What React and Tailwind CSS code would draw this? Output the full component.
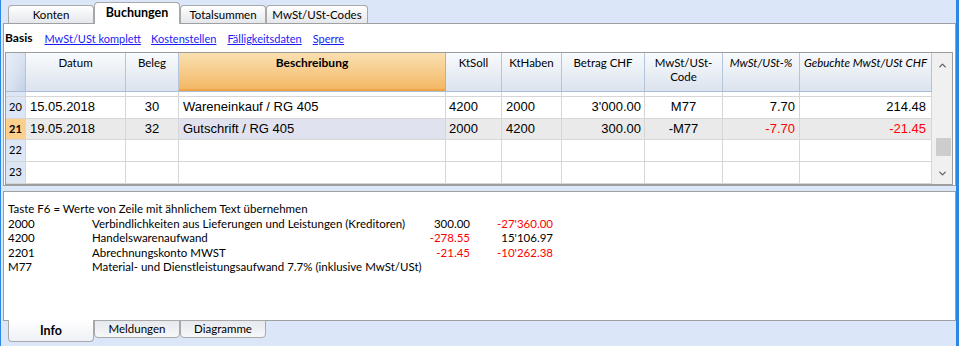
import React from 'react';
import { ChevronUp, ChevronDown } from 'lucide-react';

const GRID = 'grid grid-cols-[20px_100px_53px_267px_56px_60px_83px_78px_77px_132px]';

function HeaderRow() {
  const base = 'border-r border-[#b4c4da] bg-gradient-to-b from-[#f9fbfd] to-[#dbe3ee] flex justify-center text-center pt-[3px] leading-[14px] text-[11.5px] text-black';
  return (
    <div className={`${GRID} h-[39px] border-b border-[#aabcd4]`}>
      <div className="border-r border-[#b4c4da] bg-gradient-to-br from-[#e8eef8] via-[#dbe4f2] to-[#c3d1e6]" />
      <div className={base}>Datum</div>
      <div className={base}>Beleg</div>
      <div className="border-r border-[#f0a54a] border-b-2 border-b-[#f1a445] bg-gradient-to-b from-[#fae0b0] to-[#f3b865] flex justify-center pt-[3px] leading-[14px] text-[12px] font-bold">Beschreibung</div>
      <div className={base}>KtSoll</div>
      <div className={base}>KtHaben</div>
      <div className={base}>Betrag CHF</div>
      <div className={base}>MwSt/USt-<br />Code</div>
      <div className={`${base} italic`}>MwSt/USt-%</div>
      <div className={`${base} italic`}>Gebuchte MwSt/USt CHF</div>
    </div>
  );
}

function DataRow({ n, cells, selected }) {
  const c = 'border-r border-b border-[#d6d6d6] flex items-center text-[13px] font-["Liberation_Sans",Arial,sans-serif] whitespace-nowrap overflow-hidden';
  const bg = selected ? 'bg-[#eaeaea]' : 'bg-white';
  const red = 'text-[#ff0000]';
  return (
    <div className={`${GRID} h-[22px]`}>
      <div className={`border-r border-b border-[#d6d6d6] flex items-center justify-center text-[11px] ${selected ? 'bg-[#fcd08c] font-bold' : 'bg-[#dde6f4]'}`}>{n}</div>
      <div className={`${c} ${bg} pl-[4px]`}>{cells[0]}</div>
      <div className={`${c} ${bg} justify-center`}>{cells[1]}</div>
      <div className={`${c} ${selected ? 'bg-[#e0e3ef]' : 'bg-white'} pl-[4px]`}>{cells[2]}</div>
      <div className={`${c} ${bg} pl-[3px]`}>{cells[3]}</div>
      <div className={`${c} ${bg} pl-[4px]`}>{cells[4]}</div>
      <div className={`${c} ${bg} justify-end pr-[3px]`}>{cells[5]}</div>
      <div className={`${c} ${bg} justify-center`}>{cells[6]}</div>
      <div className={`${c} ${bg} justify-end pr-[4px] ${selected ? red : ''}`}>{cells[7]}</div>
      <div className={`${c} ${bg} justify-end pr-[5px] ${selected ? red : ''}`}>{cells[8]}</div>
    </div>
  );
}

function EmptyRow({ n, h }) {
  const c = 'border-r border-b border-[#d6d6d6] bg-white';
  return (
    <div className={`${GRID} ${h}`}>
      <div className="border-r border-b border-[#d6d6d6] bg-[#dde6f4] flex items-center justify-center text-[11px]">{n}</div>
      <div className={c} /><div className={c} /><div className={c} /><div className={c} />
      <div className={c} /><div className={c} /><div className={c} /><div className={c} /><div className={c} />
    </div>
  );
}

export default function App() {
  const tabIn = 'h-[18px] border border-b-0 border-[#a8a8a8] rounded-t-[4px] bg-gradient-to-b from-[#ffffff] to-[#e4e7ec] flex items-center justify-center leading-none whitespace-nowrap';
  const btab = 'w-[86px] h-[18px] border border-[#a8a8a8] rounded-b-[4px] bg-gradient-to-b from-[#e6e9ee] to-[#f6f7f9] flex items-center justify-center leading-none whitespace-nowrap';
  return (
    <div className="w-[959px] h-[346px] bg-[#dbe6f8] border-l border-r-[3px] border-l-[#2b87e0] border-r-[#2b87e0] overflow-hidden flex flex-col font-['Lato','Open_Sans',sans-serif] text-black">
      {/* top tabs */}
      <div className="h-[23px] flex items-end pl-[7px] text-[11.5px]">
        <div className={`w-[86px] ${tabIn}`}>Konten</div>
        <div className="w-[86px] h-[22px] -mb-px relative z-10 border border-b-0 border-[#a8a8a8] rounded-t-[4px] bg-white flex items-center justify-center font-bold text-[12.5px] leading-none">Buchungen</div>
        <div className={`w-[86px] ${tabIn}`}>Totalsummen</div>
        <div className={`w-[102px] ${tabIn}`}>MwSt/USt-Codes</div>
      </div>

      {/* main panel */}
      <div className="ml-[2px] h-[163px] border border-[#a0a0a0] bg-white flex flex-col">
        <div className="h-[28px] flex items-center pl-[1px] text-[11px] leading-none">
          <span className="font-bold text-[12px]">Basis</span>
          <span className="ml-[12px] text-[#1c1cf5] underline">MwSt/USt komplett</span>
          <span className="ml-[10px] text-[#1c1cf5] underline">Kostenstellen</span>
          <span className="ml-[11px] text-[#1c1cf5] underline">Fälligkeitsdaten</span>
          <span className="ml-[11px] text-[#1c1cf5] underline">Sperre</span>
        </div>
        <div className="ml-[1px] w-[948px] h-[133px] border border-[#9c9c9c] flex overflow-hidden">
          <div className="w-[926px] flex flex-col overflow-hidden">
            <HeaderRow />
            <EmptyRow n="" h="h-[5px]" />
            <DataRow n="20" cells={['15.05.2018', '30', 'Wareneinkauf / RG 405', '4200', '2000', "3'000.00", 'M77', '7.70', '214.48']} />
            <DataRow n="21" selected cells={['19.05.2018', '32', 'Gutschrift / RG 405', '2000', '4200', '300.00', '-M77', '-7.70', '-21.45']} />
            <EmptyRow n="22" h="h-[22px]" />
            <EmptyRow n="23" h="h-[22px]" />
          </div>
          <div className="w-[20px] bg-[#f0f0f0] flex flex-col items-center relative">
            <div className="h-[20px] flex items-center justify-center mt-[2px]">
              <ChevronUp size={11} strokeWidth={2.8} color="#606060" />
            </div>
            <div className="flex-1" />
            <div className="h-[18px] flex items-center justify-center mb-[2px]">
              <ChevronDown size={11} strokeWidth={2.8} color="#606060" />
            </div>
            <div className="absolute left-[4px] top-[85px] w-[15px] h-[18px] bg-[#cdcdcd]" />
          </div>
        </div>
      </div>

      {/* info panel */}
      <div className="ml-[2px] mt-[5px] h-[130px] border border-[#a0a0a0] bg-white pt-[10px] pl-[4px] text-[11.5px] leading-[14.5px]">
        <div>Taste F6 = Werte von Zeile mit ähnlichem Text übernehmen</div>
        <div className="grid grid-cols-[84px_308px_70px_83px]">
          <div>2000</div>
          <div className="whitespace-nowrap">Verbindlichkeiten aus Lieferungen und Leistungen (Kreditoren)</div>
          <div className="text-right">300.00</div>
          <div className="text-right text-[#ff0000]">-27'360.00</div>
          <div>4200</div>
          <div>Handelswarenaufwand</div>
          <div className="text-right text-[#ff0000]">-278.55</div>
          <div className="text-right">15'106.97</div>
          <div>2201</div>
          <div>Abrechnungskonto MWST</div>
          <div className="text-right text-[#ff0000]">-21.45</div>
          <div className="text-right text-[#ff0000]">-10'262.38</div>
          <div>M77</div>
          <div className="col-span-3 whitespace-nowrap">Material- und Dienstleistungsaufwand 7.7% (inklusive MwSt/USt)</div>
        </div>
      </div>

      {/* bottom tabs */}
      <div className="flex items-start pl-[7px] -mt-px text-[11.5px]">
        <div className="w-[86px] h-[22px] relative z-10 border border-t-0 border-[#a8a8a8] rounded-b-[4px] bg-gradient-to-b from-white to-[#eef1f6] flex items-center justify-center font-bold text-[12.5px] leading-none pt-[2px]">Info</div>
        <div className={btab}>Meldungen</div>
        <div className={btab}>Diagramme</div>
      </div>
    </div>
  );
}
